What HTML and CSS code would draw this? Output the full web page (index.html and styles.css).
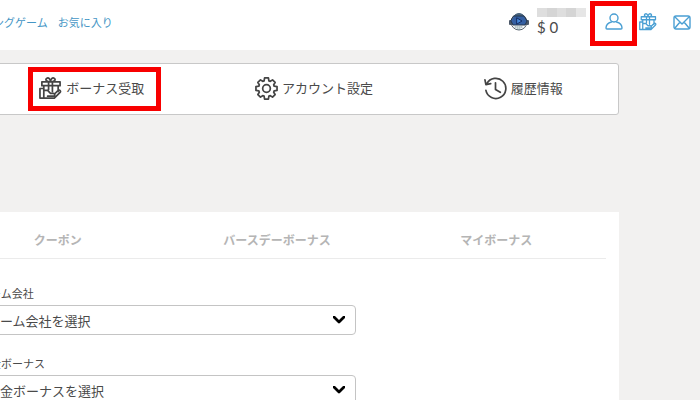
FILE: index.html
```html
<!DOCTYPE html>
<html lang="ja">
<head>
<meta charset="UTF-8">
<meta name="viewport" content="width=device-width, initial-scale=1.0">
<title>ボーナス受取</title>
<link rel="stylesheet" href="styles.css">
</head>
<body>

<!-- Shared icon shapes -->
<svg class="sprite" aria-hidden="true">
    <symbol id="icon-gift" viewBox="0 0 24 24">
        <path d="M5 12V9H3V5h19v4h-2v6M3 9h19M10 5v8M14 5v10M12 5C8 5 6 3 8 1.500s4 1 4 3.500c0-2.500 2-5 4-3.500S16 5 12 5M1 12h4v10H1zM5 14h4l3 3h3c2 0 2 3 0 3H9M16 18l4-4c2-1 3 1 2 2l-6 6H5"/>
    </symbol>
</svg>

<header class="header">
    <nav class="menu">
        <a href="#">ングゲーム</a>
        <a href="#">お気に入り</a>
    </nav>
    <div class="account">
        <svg class="avatar" viewBox="0 0 20 20" aria-hidden="true">
            <circle cx="10" cy="10" r="8" fill="#fff" stroke="#555f6b" stroke-width="1"/>
            <path d="M5 4c2-4 8-4 10 0z" fill="#48647f"/>
            <rect x="0" y="8" width="4" height="5" rx="1" fill="#4c5969"/>
            <rect x="16" y="8" width="4" height="5" rx="1" fill="#4c5969"/>
            <path d="M5 4h10l3 5-2 4H4L2 9z" fill="#3560a3" stroke="#26384e"/>
            <path d="M8 6l5 3-5 3z" fill="#4386d9" stroke="#172e62"/>
            <path d="M6 15h8M8 17h4" stroke="#719197" stroke-dasharray="1 1"/>
        </svg>
        <div class="balance">
            <span class="user-name"><i></i><i></i><i></i><i></i><i></i></span>
            <span>$ 0</span>
        </div>
    </div>
    <div class="tools">
        <a href="#" class="marked" aria-label="マイページ">
            <svg class="icon" viewBox="0 0 18 18"><circle cx="9" cy="5" r="4"/><path d="M6.500 9C3 10 1 12 1 15c0 1 0 1 1 1h14c1 0 1 0 1-1 0-3-2-5-5.500-6"/></svg>
        </a>
        <a href="#" aria-label="ボーナス">
            <svg class="icon gift"><use href="#icon-gift"/></svg>
        </a>
        <a href="#" aria-label="メール">
            <svg class="icon" viewBox="0 0 18 18"><rect x="1" y="3" width="16" height="13" rx="2"/><path d="M2 4l7 7 7-7M2 15l5-6M16 15l-5-6"/></svg>
        </a>
    </div>
</header>

<main class="page">
    <nav class="page-nav">
        <a href="#" class="marked">
            <svg class="nav-icon"><use href="#icon-gift"/></svg>
            ボーナス受取
        </a>
        <a href="#">
            <svg class="nav-icon" viewBox="0 0 24 24"><circle cx="12" cy="12" r="4"/><path d="M10 1h4l.5 3 1.500.5L18.300 3 21 5.700 19.500 8l.5 1.500 3 .5v4l-3 .5-.5 1.500 1.500 2.300-2.700 2.700-2.300-1.500-1.500.5-.5 3h-4l-.5-3-1.500-.5L5.700 21 3 18.300 4.500 16 4 14.500 1 14v-4l3-.5L4.500 8 3 5.700 5.700 3 8 4.500 9.500 4z"/></svg>
            アカウント設定
        </a>
        <a href="#">
            <svg class="nav-icon" viewBox="0 0 24 24"><path d="M3 7a10.500 10.500 0 1 1-1 7M1 3l1 5 5-1M12 6v7l5 3"/></svg>
            履歴情報
        </a>
    </nav>

    <section class="card">
        <div class="tabs">
            <button type="button">クーポン</button>
            <button type="button">バースデーボーナス</button>
            <button type="button">マイボーナス</button>
        </div>
        <form class="bonus-form">
            <div class="field">
                <label for="company">ゲーム会社</label>
                <div class="select-box">
                    <select id="company">
                        <option>ゲーム会社を選択</option>
                    </select>
                    <svg class="arrow" viewBox="0 0 12 8"><path d="M1 1l5 5 5-5"/></svg>
                </div>
            </div>
            <div class="field">
                <label for="bonus">入金ボーナス</label>
                <div class="select-box">
                    <select id="bonus">
                        <option>入金ボーナスを選択</option>
                    </select>
                    <svg class="arrow" viewBox="0 0 12 8"><path d="M1 1l5 5 5-5"/></svg>
                </div>
            </div>
        </form>
    </section>
</main>

</body>
</html>
```
FILE: styles.css
```css
* {
    box-sizing: border-box;
}

body {
    margin: 0;
    background-color: #f2f1f0;
    color: #4a4a4a;
    font-family: "Noto Sans CJK JP", sans-serif;
    font-size: 13px;
    line-height: 20px;
    overflow: hidden;
}

a {
    color: inherit;
    text-decoration: none;
}

svg {
    display: block;
    fill: none;
    stroke-linecap: round;
    stroke-linejoin: round;
}

.sprite {
    position: absolute;
    width: 0;
    height: 0;
}

/* Header */
.header {
    display: flex;
    align-items: center;
    height: 50px;
    margin-left: -64px;
    padding: 0 9px 7px 57px;
    background-color: #fff;
}

.menu {
    display: flex;
    gap: 10px;
    flex: 1;
    color: #4596c5;
    font-size: 11px;
}

.account {
    display: flex;
    align-items: center;
    gap: 8px;
}

.avatar {
    width: 20px;
    height: 20px;
}

.balance {
    display: flex;
    flex-direction: column;
    width: 68px;
    padding-top: 2px;
    font-family: Lato, sans-serif;
    font-size: 15px;
}

/* Masked user name */
.user-name {
    display: flex;
    width: 49px;
    height: 9px;
}

.user-name i {
    flex: 1;
    background-color: #dedede;
}

.user-name i:nth-child(even) {
    background-color: #d5d5d5;
}

.user-name i:last-child {
    background-color: #e6e6e6;
}

.tools {
    display: flex;
    gap: 16px;
    color: #4a9fd3;
}

.icon {
    width: 18px;
    height: 18px;
    stroke: currentColor;
    stroke-width: 1.4;
}

.gift {
    stroke-width: 1.7;
}

/* Red highlight frame */
.marked {
    position: relative;
}

.marked::after {
    content: "";
    position: absolute;
    inset: -10px -17px -11px -11px;
    border: 5px solid #f80000;
}

.tools .marked::after {
    inset: -12px -14px -15px -15px;
}

/* Page */
.page {
    margin: 13px 81px 0 -64px;
}

.page-nav {
    display: flex;
    justify-content: space-around;
    align-items: center;
    height: 52px;
    padding: 0 0 2px 47px;
    background-color: #fff;
    border: 1px solid #c8c8c8;
    border-radius: 3px;
}

.page-nav a {
    display: flex;
    align-items: center;
    gap: 4px;
}

.nav-icon {
    width: 23px;
    height: 23px;
    stroke: #444;
    stroke-width: 1.8;
}

.card {
    margin-top: 97px;
    padding: 0 13px 20px 12px;
    background-color: #fff;
}

.tabs {
    display: grid;
    grid-template-columns: repeat(3, 1fr);
    border-bottom: 1px solid #ebebeb;
}

.tabs button {
    height: 46px;
    padding: 8px 0 0;
    border: 0;
    background: none;
    color: #b5b5b5;
    font-family: inherit;
    font-size: 12px;
    font-weight: bold;
}

/* Form */
.bonus-form {
    display: grid;
    gap: 18px;
    width: 60%;
    min-width: 408px;
    padding: 24px 0 0 31px;
}

.field label {
    display: block;
    margin-bottom: 2px;
    font-size: 11px;
}

.select-box {
    position: relative;
}

.select-box select {
    display: block;
    appearance: none;
    width: 100%;
    height: 30px;
    padding: 0 30px 0 7px;
    border: 1px solid #c4c4c4;
    border-radius: 4px;
    background-color: #fff;
    color: #4a4a4a;
    font-family: inherit;
    font-size: 13px;
}

.arrow {
    position: absolute;
    top: 11px;
    right: 11px;
    width: 12px;
    height: 8px;
    stroke: #000;
    stroke-width: 2.8;
    pointer-events: none;
}
```
